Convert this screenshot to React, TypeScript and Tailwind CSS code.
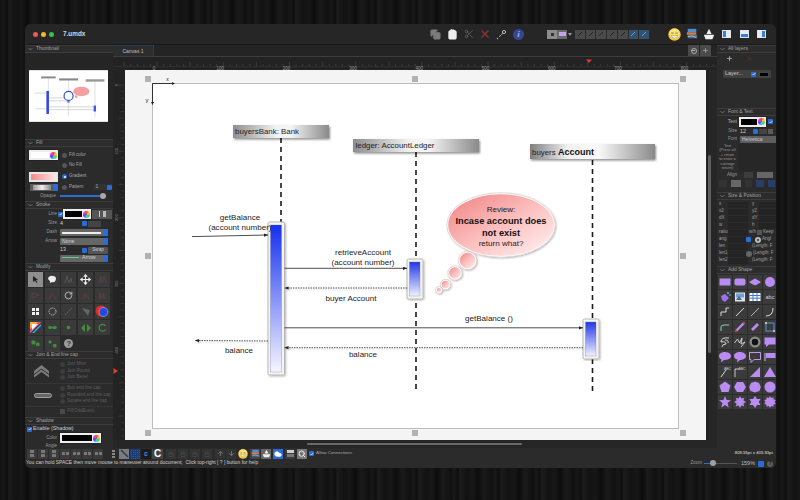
import type { ReactNode } from "react";
import { ArrowDown, ArrowUp, Clipboard, Cloud, Copy, Lock, Move, Plus, RotateCw, Scissors, Search, X } from "lucide-react";

const rulerX = [0, 100, 200, 300, 400, 500, 600, 700, 800];
const wheel = "w-[7px] h-[7px] rounded-full bg-[conic-gradient(#f43,#fc3,#4d4,#3cf,#44f,#e3e,#f43)]";

function Section({ title, className, children }: { title: string; className: string; children?: ReactNode }) {
  return (
    <div className={className}>
      <div className="flex h-[8px] items-center gap-[3px] border-b border-t border-[#3c3c3c] bg-[#2c2c2c] pl-[3px] text-[4.9px] leading-none text-[#a4a4a4]">
        <svg width="5" height="4" viewBox="0 0 5 4"><path d="M0.5 1 L2.5 3 L4.5 1" fill="none" stroke="#8a8a8a" strokeWidth="0.7" /></svg>
        {title}
      </div>
      {children}
    </div>
  );
}

function Well({ w, inner = "bg-black" }: { w: string; inner?: string }) {
  return (
    <div className={`${w} flex h-[10px] items-center justify-between bg-[#eeeeee] pl-[2px] pr-[1px] shadow-[0_0_1px_#000]`}>
      <div className={`${inner} mr-[1px] h-[6px] flex-1`} />
      <div className={wheel} />
    </div>
  );
}

function Radio({ on, label, dim }: { on?: boolean; label: string; dim?: boolean }) {
  return (
    <div className={`flex items-center gap-[2px] whitespace-nowrap text-[4.5px] leading-none ${dim ? "text-[#5e5e5e]" : "text-[#a8a8a8]"}`}>
      <span className={`flex h-[5px] w-[5px] items-center justify-center rounded-full ${on ? "bg-[#2a6cd8]" : dim ? "bg-[#3d3d3d]" : "bg-[#555555]"}`}>
        {on && <span className="h-[2px] w-[2px] rounded-full bg-white" />}
      </span>
      {label}
    </div>
  );
}

function Check({ className = "" }: { className?: string }) {
  return (
    <span className={`flex h-[5px] w-[5px] shrink-0 items-center justify-center rounded-[1px] bg-[#2a6cd8] ${className}`}>
      <svg width="4" height="4" viewBox="0 0 4 4"><path d="M0.6 2 L1.6 3 L3.4 0.8" fill="none" stroke="#fff" strokeWidth="0.7" /></svg>
    </span>
  );
}

function Blue({ className = "" }: { className?: string }) {
  return <span className={`block h-[5px] w-[5px] shrink-0 rounded-[1px] bg-[#2a6cd8] ${className}`} />;
}

function Select({ w, label, inner }: { w: string; label?: string; inner?: ReactNode }) {
  return (
    <div className={`${w} flex h-[7px] items-center justify-between rounded-[1px] bg-[#666666] pl-[2px] text-[5.2px] leading-none text-[#d0d0d0]`}>
      <span className="flex flex-1 items-center">{label}{inner}</span>
      <Blue className="h-[7px]" />
    </div>
  );
}

function Row({ h, label, children }: { h: string; label: string; children?: ReactNode }) {
  return (
    <div className={`${h} flex items-center`}>
      <span className="mr-[3px] w-[32px] text-right text-[4.5px] leading-none text-[#9a9a9a]">{label}</span>
      {children}
    </div>
  );
}

const dim = "#565656";
const green = "#3f8f3a";
const modifyIcons: ReactNode[] = [
  <svg width="9" height="9" viewBox="0 0 9 9"><path d="M2 1 L2 7 L4 5.5 L5.5 8 L6.5 7.3 L5 5 L7 4.7Z" fill="#222" /></svg>,
  <svg width="10" height="9" viewBox="0 0 10 9"><path d="M1 3 Q3 0 6 1 Q9 1 9 4 Q8 8 5 7 L3 8 L3 6 Q1 5 1 3Z" fill="#eee" /></svg>,
  <svg width="9" height="9" viewBox="0 0 9 9"><path d="M1 8 L3 1 L5 8 M5 8 L7 3 L8 8" fill="none" stroke={dim} /></svg>,
  <Move size={11} color="#f0f0f0" strokeWidth={2.5} />,
  <svg width="9" height="9" viewBox="0 0 9 9"><path d="M1 8 L3 1 L4 8 M5 8 L6 1 L8 8" fill="none" stroke="#5a3f3f" /></svg>,
  <svg width="9" height="9" viewBox="0 0 9 9"><path d="M1 2 L8 4 L1 7Z" fill="none" stroke="#5a3f3f" /></svg>,
  <svg width="9" height="9" viewBox="0 0 9 9"><path d="M1 8 L4 2 L8 8" fill="none" stroke="#5a3f3f" /></svg>,
  <RotateCw size={9} color="#dddddd" strokeWidth={2} />,
  <svg width="9" height="9" viewBox="0 0 9 9"><path d="M1 8 L4 2 L8 8 M4 2 L4 8" fill="none" stroke="#5a3f3f" /></svg>,
  <svg width="9" height="9" viewBox="0 0 9 9"><path d="M1 8 L2 2 L3 8 M4 8 L5 2 L6 8 L8 4" fill="none" stroke="#5a3f3f" /></svg>,
  <svg width="9" height="9" viewBox="0 0 9 9"><g fill="#f2f2f2"><rect x="1" y="1" width="3" height="3" /><rect x="5" y="1" width="3" height="3" /><rect x="1" y="5" width="3" height="3" /><rect x="5" y="5" width="3" height="3" /></g></svg>,
  <svg width="9" height="9" viewBox="0 0 9 9"><circle cx="4.5" cy="4.5" r="3.5" fill="none" stroke="#ddd" strokeDasharray="1 1" /></svg>,
  <svg width="9" height="9" viewBox="0 0 9 9"><path d="M1 8 L8 1" stroke="#777" strokeWidth="0.8" strokeDasharray="2 1" /></svg>,
  <svg width="10" height="10" viewBox="0 0 10 10"><path d="M1 1 L9 3 L7 9 L4 5Z" fill="#5d6a62" /></svg>,
  <svg width="15" height="15" viewBox="0 0 15 15"><circle cx="6" cy="7" r="5.5" fill="#e62a22" /><circle cx="8.5" cy="8" r="4.5" fill="#2448e0" stroke="#cfd6ff" strokeWidth="0.5" /></svg>,
  <svg width="13" height="13" viewBox="0 0 13 13"><path d="M1 12 V1 H12Z" fill="#f3b13c" /><path d="M1 12 V8 L9 1 H12Z" fill="#e9458a" /><path d="M3 12 L12 3 V5 L5 12Z" fill="#34a8e8" /><path d="M3 3 H9 L3 9Z" fill="#fff" /></svg>,
  <svg width="9" height="5" viewBox="0 0 9 5"><g fill={green}><circle cx="2" cy="2.5" r="1.8" /><circle cx="7" cy="2.5" r="1.8" /><rect x="2" y="1.6" width="5" height="1.8" /></g></svg>,
  <svg width="5" height="5" viewBox="0 0 5 5"><circle cx="2.5" cy="2.5" r="1.8" fill={green} /></svg>,
  <svg width="10" height="8" viewBox="0 0 10 8"><g fill={green}><path d="M4 0 V8 L0 4Z" /><path d="M6 0 V8 L10 4Z" /></g></svg>,
  <svg width="9" height="9" viewBox="0 0 9 9"><path d="M7.5 3 A3.4 3.4 0 1 0 7.5 6.5" fill="none" stroke={green} strokeWidth="1.2" /></svg>,
  <svg width="9" height="7" viewBox="0 0 9 7"><g fill={green}><rect x="0.5" y="0.5" width="4" height="4" rx="1" /><rect x="5" y="2.5" width="3.5" height="3.5" rx="1" /></g></svg>,
  <svg width="9" height="8" viewBox="0 0 9 8"><g fill={green}><rect x="0.5" y="0.5" width="3" height="3" rx="1" /><rect x="5" y="4" width="3.5" height="3.5" rx="1" /></g></svg>,
  <span className="flex h-[9px] w-[9px] items-center justify-center rounded-full bg-[#9a9a9a] text-[7px] font-bold leading-none text-[#333333]">?</span>,
];

const P = "#b98cf2";
const wire = "#e9e9e9";
const shapeIcons: ReactNode[] = [
  <rect x="1.5" y="3.5" width="11" height="7" fill={P} />,
  <rect x="1.5" y="3.5" width="11" height="7" rx="2" fill={P} />,
  <path d="M1 7 Q4 5 7 3.5 Q10 5 13 7 Q10 9 7 10.5 Q4 9 1 7Z" fill={P} />,
  <circle cx="7" cy="7" r="5" fill={P} />,
  <g><path d="M3 6 L7 4 L11 8 L7 12 L4 10Z" fill="#a070ee" /><circle cx="10" cy="3" r="1" fill="#5cc8f0" /><circle cx="12" cy="5" r="0.8" fill="#5cc8f0" /></g>,
  <g><rect x="2" y="2.5" width="10" height="9" fill="#dbe4ee" /><rect x="3" y="3.5" width="8" height="4" fill="#6da0d8" /><path d="M3 10 L6 6 L9 10Z" fill="#55606a" /></g>,
  <g><rect x="1.5" y="3" width="11" height="8" fill="#fff" /><path d="M1.5 5.5 H12.5 M1.5 8.2 H12.5 M5 3 V11 M9 3 V11" stroke="#3a78d8" strokeWidth="1" /></g>,
  <text x="7" y="9" fontSize="5.5" textAnchor="middle" fill="#cfcfcf">abc</text>,
  <path d="M3 11 V7 H8 V3 H11" fill="none" stroke={wire} strokeWidth="0.9" />,
  <path d="M3 11 L11 3" stroke={wire} strokeWidth="0.9" />,
  <path d="M3 11 L11 3" stroke={wire} strokeWidth="0.7" />,
  <path d="M3 11 Q10 11 10 3" fill="none" stroke={wire} strokeWidth="0.9" />,
  <path d="M3 11 V7 Q3 5 6 5 H11" fill="none" stroke="#8fe0d8" strokeWidth="0.9" />,
  <g><path d="M3 11 L11 3" stroke={P} strokeWidth="2.4" /><circle cx="3" cy="11" r="1" fill="#e33" /><circle cx="11" cy="3" r="1" fill="#e33" /></g>,
  <path d="M4 10 L10 4" stroke={P} strokeWidth="2.8" />,
  <g><rect x="3" y="3" width="8" height="8" fill="none" stroke="#5c8fe0" /><rect x="2" y="2" width="2" height="2" fill="#bbb" /><rect x="10" y="10" width="2" height="2" fill="#bbb" /></g>,
  <path d="M11 3 Q3 2 3 7 Q8 6 8 9 Q4 9 4 12 M7 5 Q11 5 10 8" fill="none" stroke={wire} strokeWidth="0.9" />,
  <path d="M1.5 8 L4.5 4 L6.5 8 L9 3 L8 9 L12 7 L8 12" fill="none" stroke={wire} strokeWidth="0.8" />,
  <g><circle cx="7" cy="7" r="5.5" fill="#8a8a8a" /><circle cx="7" cy="7" r="3.2" fill="#111" /></g>,
  <path d="M1.5 2.5 H12.5 V9.5 H6 L3 12 V9.5 H1.5Z" fill={P} />,
  <path d="M7 2 C12 2 13 5 13 6 C13 9 9 10 6 10 L3 12.5 L3.5 9.5 C2 9 1 7.5 1 6 C1 3.5 4 2 7 2Z" fill={P} />,
  <path d="M7 2 C12 2 13 5 13 6 C13 9 9 10 7 10 L4 12.5 L4.5 9.5 C2 9 1 7.5 1 6 C1 3.5 4 2 7 2Z" fill={P} />,
  <path d="M1.5 2.5 H12.5 V9.5 H6 L3 12.5 V9.5 H1.5Z" fill="none" stroke="#c9a6f7" strokeWidth="0.9" />,
  <g><rect x="3" y="3" width="9.5" height="5" fill={P} /><path d="M2 3 V11" stroke={wire} strokeWidth="0.8" /></g>,
  <g><path d="M3 12 L8 5" stroke={wire} strokeWidth="0.9" /><text x="9.5" y="5" fontSize="3.5" textAnchor="middle" fill="#ccc">ABC</text></g>,
  <g><path d="M2 12 V4 H6" fill="none" stroke={wire} strokeWidth="0.8" /><text x="9" y="5" fontSize="3.5" textAnchor="middle" fill="#ccc">ABC</text></g>,
  <path d="M2 12 L12 2 V12Z" fill={P} />,
  <path d="M7 2 L13 12 H1Z" fill={P} />,
  <path d="M7 1.5 L12.5 5.5 L10.5 12 H3.5 L1.5 5.5Z" fill={P} />,
  <path d="M4 2 H10 L13 7 L10 12 H4 L1 7Z" fill={P} />,
  <path d="M7 1.5 L11 3 L12.8 7 L11.5 11 L7 12.5 L2.5 11 L1.2 7 L3 3Z" fill={P} />,
  <circle cx="7" cy="7" r="5.5" fill={P} />,
  <path d="M7 1 L8.6 5 L13 5.3 L9.6 8 L10.7 12.5 L7 10 L3.3 12.5 L4.4 8 L1 5.3 L5.4 5Z" fill={P} />,
  <path d="M7 1 L8.4 3.6 L11.2 2.8 L10.4 5.6 L13 7 L10.4 8.4 L11.2 11.2 L8.4 10.4 L7 13 L5.6 10.4 L2.8 11.2 L3.6 8.4 L1 7 L3.6 5.6 L2.8 2.8 L5.6 3.6Z" fill={P} />,
  <path d="M7 1 L9 4 L12.5 4 L10.8 7 L12.5 10 L9 10 L7 13 L5 10 L1.5 10 L3.2 7 L1.5 4 L5 4Z" fill={P} />,
  <path d="M7 1 L8.2 3 L10.5 2.2 L10.6 4.4 L12.8 5 L11.5 7 L12.8 9 L10.6 9.6 L10.5 11.8 L8.2 11 L7 13 L5.8 11 L3.5 11.8 L3.4 9.6 L1.2 9 L2.5 7 L1.2 5 L3.4 4.4 L3.5 2.2 L5.8 3Z" fill={P} />,
];

function Emoji({ size }: { size: number }) {
  return (
    <svg width={size} height={size} viewBox="0 0 14 14">
      <circle cx="7" cy="7" r="6.7" fill="#f3c63c" />
      <circle cx="7" cy="6" r="5.5" fill="#fbe27a" />
      <path d="M3.5 5.5 H6 M8 5.5 H10.5" stroke="#6b4d10" strokeWidth="0.8" />
      <path d="M3.5 8 Q7 9 10.5 8 Q9.5 11 7 11 Q4.5 11 3.5 8Z" fill="#fff" stroke="#6b4d10" strokeWidth="0.4" />
    </svg>
  );
}

function LayersIcon({ size }: { size: number }) {
  return (
    <svg width={size} height={size} viewBox="0 0 14 14">
      <rect x="2" y="1" width="10" height="4" fill="#4f8fd0" />
      <rect x="1" y="5" width="11" height="3" fill="#d87a4a" />
      <rect x="2" y="8" width="11" height="4" fill="#3c6ea8" />
      <path d="M2 10 Q7 8 12 11" stroke="#e8c070" fill="none" />
    </svg>
  );
}

function BoatIcon({ size }: { size: number }) {
  return (
    <svg width={size} height={size} viewBox="0 0 14 14">
      <path d="M7 1 L10 7 H4Z" fill="#f0f0f0" />
      <path d="M1 8 H13 L11 13 H3Z" fill="#f0f0f0" />
    </svg>
  );
}

function PanelIcon({ side }: { side: "left" | "bottom" | "right" }) {
  return (
    <div className="flex h-[8px] w-[9px] border border-[#dce6f2] bg-[#e6edf6]">
      {side === "left" && <div className="h-full w-[3px] bg-[#3f7fd2]" />}
      {side === "bottom" && <div className="mt-auto h-[3px] w-full bg-[#3f7fd2]" />}
      {side === "right" && <div className="ml-auto h-full w-[3px] bg-[#3f7fd2]" />}
    </div>
  );
}

function TitleBar() {
  return (
    <div className="flex h-[21px] shrink-0 items-center border-b border-[#1a1a1a] bg-[#262626]">
      <div className="ml-[8px] flex gap-[3px]">
        <span className="h-[5px] w-[5px] rounded-full bg-[#ee5a52]" />
        <span className="h-[5px] w-[5px] rounded-full bg-[#f3b62f]" />
        <span className="h-[5px] w-[5px] rounded-full bg-[#35c24a]" />
      </div>
      <span className="ml-[9px] w-[22px] text-[6.4px] font-bold leading-none text-[#d8d8d8]">7.umdx</span>
      <div className="ml-[342px] flex items-center">
        <span className="flex w-[17px] justify-center"><Copy size={11} color="#7b7b7b" fill="#7b7b7b" /></span>
        <span className="flex w-[16px] justify-center"><Clipboard size={11} color="#eeeeee" fill="#eeeeee" /></span>
        <span className="flex w-[17px] justify-center"><Scissors size={10} color="#5c6668" /></span>
        <span className="flex w-[16px] justify-center"><X size={12} color="#8c3030" strokeWidth={3} /></span>
        <span className="flex w-[17px] justify-center">
          <svg width="11" height="11" viewBox="0 0 11 11"><path d="M3 8 L7 4" stroke="#999" /><circle cx="8" cy="3" r="1.6" fill="none" stroke="#bbb" /><circle cx="1.5" cy="9.5" r="0.7" fill="#bbb" /></svg>
        </span>
        <span className="ml-[3px] flex h-[11px] w-[11px] items-center justify-center rounded-full bg-[#34478f] [font-family:'Liberation_Serif',serif] text-[9px] font-bold italic leading-none text-[#9fb0e8]">i</span>
      </div>
      <div className="ml-[23px] flex items-center">
        <span className="flex h-[9px] w-[10px] items-center justify-center bg-[#8c8c8c]"><span className="h-[3px] w-[3px] bg-[#333333]" /></span>
        <span className="flex h-[9px] w-[10px] items-center justify-center bg-[#6a6a6a]"><span className="h-[4px] w-[7px] bg-[#c4a2f2]" /></span>
        <svg className="ml-[1px]" width="4" height="3" viewBox="0 0 4 3"><path d="M0 0 H4 L2 3Z" fill="#999" /></svg>
      </div>
      <div className="ml-[3px] flex h-[9px] w-[75px]">
        {["#4a4a4a", "#4a4a4a", "#4a4a4a", "#4a4a4a", "#4a4a4a", "#33526e", "#33526e"].map((c, i) => (
          <span key={i} className="flex flex-1 items-center justify-center border-r border-[#2a2a2a]" style={{ backgroundColor: c }}>
            <svg width="6" height="6" viewBox="0 0 6 6"><path d="M1 5 L5 1" stroke={i > 4 ? "#5aa0e8" : "#222"} strokeWidth="1" /></svg>
          </span>
        ))}
      </div>
      <div className="ml-[18px]"><Emoji size={13} /></div>
      <div className="ml-[4.5px]"><LayersIcon size={12} /></div>
      <div className="ml-[5px]"><BoatIcon size={12} /></div>
      <div className="ml-[7.5px]"><PanelIcon side="left" /></div>
      <div className="ml-[9px]"><PanelIcon side="bottom" /></div>
      <div className="ml-[8px]"><PanelIcon side="right" /></div>
    </div>
  );
}

function Thumbnail() {
  return (
    <svg className="ml-[4px] mt-[17px] block" width="79" height="52" viewBox="152 83 527 345">
      <rect x="152" y="83" width="527" height="345" fill="#fff" />
      <rect x="233" y="125" width="97" height="13" fill="#888" />
      <rect x="353" y="138" width="127" height="14" fill="#888" />
      <rect x="530" y="144" width="125" height="16" fill="#999" />
      <path d="M281 138 V375 M416 152 V391 M592 160 V394" stroke="#bbb" strokeWidth="3" />
      <rect x="268" y="222" width="17" height="153" fill="#3345e0" />
      <rect x="407" y="259" width="16" height="41" fill="#6677ee" />
      <rect x="583" y="319" width="16" height="40" fill="#4455e8" />
      <path d="M192 236 H268 M284 268 H407 M284 288 H407 M284 328 H583 M284 347 H583 M195 341 H268" stroke="#777" strokeWidth="2" />
      <ellipse cx="501" cy="225" rx="54" ry="32" fill="#f2a0a0" />
      <circle cx="416" cy="255" r="30" fill="#fff" stroke="#2a52d8" strokeWidth="8" />
      <circle cx="467" cy="260" r="9" fill="#f2a0a0" />
    </svg>
  );
}

function LeftPanel() {
  return (
    <div className="flex h-full w-[88px] shrink-0 flex-col bg-[#2b2b2b]">
      <Section title="Thumbnail" className="h-[94px] bg-[#252525]"><Thumbnail /></Section>
      <Section title="Fill" className="h-[62px]">
        <div className="pt-[3px]">
          <div className="flex h-[10px] items-center pl-[4px]">
            <Well w="w-[29px]" inner="bg-white" />
            <div className="ml-[4px]"><Radio label="Fill color" /></div>
          </div>
          <div className="flex h-[11px] items-center pl-[37px]"><Radio label="No Fill" /></div>
          <div className="flex h-[11px] items-center pl-[4px]">
            <div className="flex h-[10px] w-[29px] items-center bg-[#e6e6e6] px-[2px]"><div className="h-[6px] w-full bg-[linear-gradient(90deg,#f08a8a,#ffe3e3)]" /></div>
            <div className="ml-[4px]"><Radio on label="Gradient" /></div>
          </div>
          <div className="flex h-[10px] items-center pl-[5px]">
            <div className="flex h-[7px] w-[28px] items-center bg-[#5c5c5c] pl-[3px]"><div className="mr-[2px] h-[5px] flex-1 bg-[linear-gradient(90deg,#999,#eee,#888)]" /><Blue className="h-[7px]" /></div>
            <div className="ml-[4px]"><Radio label="Pattern" /></div>
            <span className="ml-[10px] flex h-[6px] w-[18px] items-center justify-between bg-[#333333] pl-[2px] text-[5px] text-[#aaaaaa]">1<Blue /></span>
          </div>
          <div className="flex h-[8px] items-center">
            <span className="mr-[4px] w-[31px] text-right text-[4.5px] leading-none text-[#999999]">Opaque</span>
            <div className="relative h-[1.5px] w-[46px] bg-[#2a6cd8]"><span className="absolute -top-[2px] right-0 h-[6px] w-[6px] rounded-full bg-[#a8a8a8]" /></div>
          </div>
        </div>
      </Section>
      <Section title="Stroke" className="h-[62px]">
        <Row h="h-[10px]" label="Line">
          <Check className="-ml-[2px] mr-[1px]" />
          <div className="-ml-[1px]"><Well w="w-[28px]" /></div>
          <span className="ml-[1px] flex h-[9px] w-[20px] items-center justify-center gap-[3px] bg-[#555555]">
            <span className="h-[6px] w-[1px] bg-[#cccccc]" /><span className="h-[6px] w-[3px] bg-[#bbbbbb]" />
          </span>
        </Row>
        <Row h="h-[9px]" label="Size">
          <span className="w-[22px] text-[5.5px] leading-none text-[#cccccc]">4</span>
          <Blue />
          <span className="ml-[1px] h-[6px] w-[13px] bg-[#444444]" />
        </Row>
        <Row h="h-[9px]" label="Dash"><Select w="w-[48px]" inner={<span className="mr-[2px] h-[2px] flex-1 bg-[#eeeeee]" />} /></Row>
        <Row h="h-[9px]" label="Arrow"><Select w="w-[48px]" label="None" /></Row>
        <div className="flex h-[8px] items-center pl-[35px]">
          <span className="w-[22px] text-[5.2px] leading-none text-[#cccccc]">13</span>
          <Blue />
          <span className="ml-[1px] flex h-[7px] w-[20px] items-center justify-center rounded-[1px] bg-[#555555] text-[4.6px] leading-none text-[#cccccc]">Swap</span>
        </div>
        <div className="flex h-[8px] items-center pl-[35px]"><Select w="w-[48px]" inner={<><span className="h-[1px] w-[17px] bg-[#5fd08a]" /><span className="ml-[3px] text-[5.2px]">Arrow</span></>} /></div>
      </Section>
      <Section title="Modify" className="h-[88px]">
        <div className="grid grid-cols-[repeat(5,15px)] gap-x-[1.7px] gap-y-px pl-[3px] pt-[1px]">
          {modifyIcons.map((icon, i) => (
            <div key={i} className={`flex h-[15px] w-[15px] items-center justify-center ${i === 0 ? "bg-[#8e8e8e]" : i === 22 ? "" : "bg-[#3a3a3a]"}`}>{icon}</div>
          ))}
        </div>
      </Section>
      <Section title="Join & End line cap" className="h-[66px]">
        <div className="flex h-[25px] items-center border-b border-[#363636]">
          <svg className="ml-[8px]" width="17" height="14" viewBox="0 0 17 14">
            <path d="M1 7 L8.5 1 L16 7 V10 L8.5 4.5 L1 10Z M1 11 L8.5 5.5 L16 11 V13.5 L8.5 8 L1 13.5Z" fill="#7d7d7d" />
          </svg>
          <div className="ml-[10px] flex flex-col gap-[1.5px]">
            <Radio dim label="Join Miter" />
            <Radio dim label="Join Round" />
            <Radio dim label="Join Bevel" />
          </div>
        </div>
        <div className="flex h-[23px] items-center border-b border-[#363636]">
          <span className="ml-[9px] block h-[5px] w-[18px] rounded-full border border-[#a0a0a0] bg-[#666666]" />
          <div className="ml-[8px] flex flex-col gap-[1.5px]">
            <Radio dim label="Butt end line cap" />
            <Radio dim label="Rounded end line cap" />
            <Radio dim label="Square end line cap" />
          </div>
        </div>
        <div className="flex h-[9px] items-center gap-[2px] pl-[35px] text-[4.5px] leading-none text-[#5e5e5e]">
          <span className="h-[5px] w-[5px] bg-[#4a4a4a]" />Fill(OddEven)
        </div>
      </Section>
      <Section title="Shadow" className="h-[31px] overflow-hidden">
        <div className="flex h-[8px] items-center gap-[1px] pl-[2px] text-[5.3px] leading-none text-[#cfcfcf]"><Check />Enable (Shadow)</div>
        <Row h="h-[10px]" label="Color"><Well w="w-[41px]" /></Row>
        <Row h="h-[6px]" label="Angle" />
      </Section>
    </div>
  );
}

function Tabs() {
  return (
    <div className="flex h-[12px] shrink-0 items-stretch border-b border-[#3c3c3c] bg-[#242424]">
      <div className="flex w-[41px] items-center justify-center border-r border-t border-[#1c3d5c] border-r-[#3c3c3c] bg-[#2d2d2d] text-[5px] leading-none text-[#c0c0c0]">Canvas 1</div>
      <div className="ml-auto mr-[6px] flex">
        <span className="flex w-[11px] items-center justify-center bg-[#4a4a4a]"><span className="flex h-[6px] w-[6px] items-center justify-center rounded-full border border-[#aaaaaa]"><span className="h-px w-[3px] bg-[#aaaaaa]" /></span></span>
        <span className="ml-px flex w-[11px] items-center justify-center bg-[#4a4a4a]"><Plus size={7} color="#bbbbbb" /></span>
      </div>
    </div>
  );
}

function RulerTop() {
  return (
    <div className="h-[13px] shrink-0 bg-[#232323]">
      <svg className="block" width="604" height="13" viewBox="113 57 604 13">
        {Array.from({ length: 92 }).map((_, i) => {
          const x = 124 + i * 6.62;
          return <path key={i} d={`M${x} ${i % 5 === 0 ? 62 : 64} V66`} stroke="#555555" strokeWidth="0.5" />;
        })}
        <path d="M113 66.5 H717" stroke="#3a3a3a" strokeWidth="0.5" />
        {rulerX.map((v, i) => (
          <text key={v} x={154 + i * 66.3} y="69.5" fontSize="4.5" textAnchor="middle" fill="#9a9a9a">{v}</text>
        ))}
        <path d="M586 59.5 H592 L589 63Z" fill="#e23b2e" />
      </svg>
    </div>
  );
}

function RulerLeft() {
  return (
    <div className="w-[12px] shrink-0 bg-[#232323]">
      <svg className="block" width="12" height="370" viewBox="113 70 12 370">
        {Array.from({ length: 56 }).map((_, i) => {
          const y = 85 + i * 6.62;
          return <path key={i} d={`M${i % 5 === 0 ? 119 : 121} ${y} H124`} stroke="#4d4d4d" strokeWidth="0.5" />;
        })}
        {[0, 100, 200, 300, 400].map((v, i) => (
          <text key={v} x={118} y={85 + i * 66.3} fontSize="4" textAnchor="middle" fill="#8a8a8a" transform={`rotate(-90 118 ${85 + i * 66.3})`}>{v}</text>
        ))}
        <path d="M113.5 368 L118 371 L113.5 374Z" fill="#e23b2e" />
      </svg>
    </div>
  );
}

function Activation({ x, y, w, h, id }: { x: number; y: number; w: number; h: number; id: string }) {
  return (
    <g>
      <rect x={x} y={y} width={w} height={h} rx="1.5" fill="#f4f4f4" stroke="#a9a9a9" strokeWidth="0.8" filter="url(#soft)" />
      <rect x={x + 2.5} y={y + 3} width={w - 5.5} height={h - 6} fill={`url(#${id})`} stroke="#6a6aa0" strokeWidth="0.3" />
    </g>
  );
}

function Head({ x, y, w, h, fill }: { x: number; y: number; w: number; h: number; fill: string }) {
  return <rect x={x} y={y} width={w} height={h} fill={fill} filter="url(#drop)" />;
}

const label = { fontSize: 8.05, fill: "#1c1c1c", textAnchor: "middle" as const };

function Diagram() {
  return (
    <svg className="block" width="581" height="370" viewBox="125 70 581 370">
      <defs>
        <linearGradient id="hg"><stop offset="0" stopColor="#8d8d8d" /><stop offset="0.45" stopColor="#f2f2f2" /><stop offset="0.6" stopColor="#f4f4f4" /><stop offset="1" stopColor="#8a8a8a" /></linearGradient>
        <linearGradient id="hg2"><stop offset="0" stopColor="#7f7f7f" /><stop offset="0.3" stopColor="#f0f0f0" /><stop offset="0.55" stopColor="#fafafa" /><stop offset="1" stopColor="#8a8a8a" /></linearGradient>
        <linearGradient id="act" x1="0" y1="0" x2="0" y2="1"><stop offset="0" stopColor="#1530ee" /><stop offset="1" stopColor="#f6f6ff" /></linearGradient>
        <linearGradient id="act2" x1="0" y1="0" x2="0" y2="1"><stop offset="0" stopColor="#2238e6" /><stop offset="1" stopColor="#f0f0ff" /></linearGradient>
        <linearGradient id="pink" x1="0" y1="0" x2="1" y2="1"><stop offset="0" stopColor="#f08080" /><stop offset="0.55" stopColor="#fdc4c4" /><stop offset="1" stopColor="#fff4f4" /></linearGradient>
        <filter id="drop" x="-5%" y="-30%" width="110%" height="170%"><feDropShadow dx="1" dy="1.5" stdDeviation="1.2" floodColor="#000" floodOpacity="0.45" /></filter>
        <filter id="soft" x="-30%" y="-5%" width="160%" height="110%"><feDropShadow dx="1" dy="1" stdDeviation="1" floodColor="#000" floodOpacity="0.3" /></filter>
        <marker id="ah" markerWidth="6" markerHeight="5" refX="5" refY="2.5" orient="auto"><path d="M0 0.5 L5 2.5 L0 4.5Z" fill="#222" /></marker>
      </defs>
      <rect x="125" y="70" width="581" height="370" fill="#f4f4f4" />
      <rect x="152.5" y="83.5" width="526" height="345" fill="#ffffff" stroke="#bdbdbd" strokeWidth="1" />

      {[[148, 79], [415, 79], [683, 79], [148, 256], [683, 256], [148, 433], [415, 433], [683, 433]].map(([x, y]) => (
        <rect key={`${x}-${y}`} x={x - 3} y={y - 3} width="6" height="6" fill="#b2b2b2" />
      ))}

      <path d="M152.5 103 V83.5 H172" fill="none" stroke="#222" strokeWidth="0.9" />
      <path d="M172 82 L175 83.5 L172 85Z M151 102 L152.5 105 L154 102Z" fill="#222" />
      <text x="167.5" y="81" fontSize="5" textAnchor="middle" fill="#222">x</text>
      <text x="147" y="102" fontSize="6" textAnchor="middle" fill="#222">y</text>

      <path d="M281 138 V222 M416 152 V259 M416 303 V391 M592.5 160 V319 M592.5 359 V394" stroke="#1a1a1a" strokeWidth="1.6" strokeDasharray="5 4" />

      <Head x={233} y={125} w={96} h={13} fill="url(#hg)" />
      <text x="235" y="133.5" fontSize="7.9" fill="#1c1c1c">buyersBank: Bank</text>
      <Head x={353} y={139} w={126} h={13} fill="url(#hg)" />
      <text x="355.5" y="147.8" fontSize="7.9" fill="#1c1c1c">ledger: AccountLedger</text>
      <Head x={530} y={144} w={125} h={15} fill="url(#hg2)" />
      <text x="532" y="154.5" fontSize="7.9" fill="#1c1c1c">buyers <tspan fontWeight="bold" fontSize="9" fill="#111">Account</tspan></text>

      <Activation x={268} y={222} w={16.5} h={153} id="act" />
      <Activation x={407} y={259} w={16} h={40} id="act2" />
      <Activation x={583} y={319} w={16} h={40} id="act2" />

      <path d="M192 236.6 L268 235" stroke="#222" strokeWidth="0.8" markerEnd="url(#ah)" />
      <path d="M284.5 268.3 H407" stroke="#222" strokeWidth="0.8" markerEnd="url(#ah)" />
      <path d="M284.5 327.8 H583" stroke="#222" strokeWidth="0.8" markerEnd="url(#ah)" />
      <g stroke="#333" strokeWidth="0.8" strokeDasharray="1.5 1" markerEnd="url(#ah)" filter="url(#soft)">
        <path d="M407 288 H284.5" />
        <path d="M583 347.7 H284.5" />
        <path d="M268 341 L195 340.5" />
      </g>

      <text {...label} x="240" y="220">getBalance</text>
      <text {...label} x="240" y="230">(account number)</text>
      <text {...label} x="363" y="254.5">retrieveAccount</text>
      <text {...label} x="363" y="264.5">(account number)</text>
      <text {...label} x="351" y="301">buyer Account</text>
      <text {...label} x="239" y="353">balance</text>
      <text {...label} x="363" y="357">balance</text>
      <text {...label} x="489" y="321">getBalance ()</text>

      <g fill="url(#pink)" stroke="#fff" strokeWidth="1.4" filter="url(#soft)">
        <ellipse cx="501" cy="225" rx="53.5" ry="31.5" />
        <circle cx="467.6" cy="260.5" r="8.5" />
        <circle cx="455" cy="273" r="6.5" />
        <circle cx="445.5" cy="284.5" r="4.5" />
        <circle cx="439" cy="290" r="2.8" />
      </g>
      <g fill="none" stroke="#b9a0a0" strokeWidth="0.4">
        <ellipse cx="501" cy="225" rx="54.2" ry="32.2" />
        <circle cx="467.6" cy="260.5" r="9.2" />
        <circle cx="455" cy="273" r="7.2" />
        <circle cx="445.5" cy="284.5" r="5.2" />
        <circle cx="439" cy="290" r="3.5" />
      </g>
      <text {...label} x="501" y="212">Review:</text>
      <text x="501" y="223.5" fontSize="9.25" fontWeight="bold" textAnchor="middle" fill="#111">Incase account does</text>
      <text x="501" y="235.5" fontSize="9.25" fontWeight="bold" textAnchor="middle" fill="#111">not exist</text>
      <text {...label} x="501" y="246">return what?</text>
    </svg>
  );
}

function CenterPane() {
  return (
    <div className="flex h-full min-w-0 flex-1 flex-col bg-[#262626]">
      <Tabs />
      <RulerTop />
      <div className="flex h-[370px] shrink-0">
        <RulerLeft />
        <Diagram />
        <div className="ml-[1px] w-[10px] border-l border-[#1c1c1c] pt-[85px]">
          <div className="h-[198px] w-[3px] rounded-full bg-[#5e5e5e]" />
        </div>
      </div>
      <div className="pl-[194px] pt-[3px]">
        <div className="h-[2px] w-[215px] rounded-full bg-[#6a6a6a]" />
      </div>
    </div>
  );
}

function SizeRow({ a, b, right }: { a: string; b?: string; right?: ReactNode }) {
  return (
    <div className="flex h-[7px] items-center text-[4.5px] leading-none text-[#a0a0a0]">
      <span className="ml-[2px] w-[9px]">{a}</span>
      <span className="h-[6px] w-[20px] bg-[#242424]" />
      {right ?? (
        <>
          <span className="ml-[4px] w-[7px]">{b}</span>
          <span className="h-[6px] w-[17px] bg-[#242424]" />
        </>
      )}
    </div>
  );
}

function RightPanel() {
  return (
    <div className="flex h-full w-[59px] shrink-0 flex-col bg-[#2b2b2b]">
      <Section title="All layers" className="h-[63px]">
        <div className="flex h-[11px] items-center">
          <span className="ml-[9px]"><Plus size={7} color="#a8a8a8" strokeWidth={3} /></span>
          <span className="ml-[13px]"><X size={7} color="#5a2d2d" strokeWidth={3} /></span>
        </div>
        <div className="ml-[6px] mt-[6px] flex h-[8px] w-[48px] items-center rounded-[1px] bg-[#414141] pl-[2px] text-[5.5px] leading-none text-[#c8c8c8]">
          <span className="w-[26px]">Layer...</span>
          <Check />
          <span className="ml-[3px] h-[5px] w-[10px] border border-[#444444] bg-black" />
        </div>
      </Section>
      <Section title="Font & Text" className="h-[84px]">
        <div className="flex h-[11px] items-center">
          <span className="w-[20px] text-right text-[5px] leading-none text-[#b0b0b0]">Text</span>
          <div className="ml-[2px]"><Well w="w-[27px]" /></div>
          <Check className="ml-[2px]" />
        </div>
        <div className="flex h-[9px] items-center text-[4.5px] leading-none text-[#999999]">
          <span className="w-[20px] text-right">Size</span>
          <span className="ml-[3px] w-[13px] text-[5.5px] text-[#cccccc]">12</span>
          <Blue />
          <span className="ml-[1px] h-[5px] w-[8px] bg-[#444444]" />
          <span className="ml-[1px] h-[5px] w-[5px] bg-[#5a5a5a]" />
        </div>
        <div className="flex h-[7px] items-center text-[4.5px] leading-none text-[#999999]">
          <span className="w-[20px] text-right">Font</span>
          <span className="ml-[3px] flex h-[7px] flex-1 items-center bg-[#5e5e5e] pl-[2px] text-[5px] text-[#cccccc]">Helvetica</span>
        </div>
        <div className="flex h-[28px] items-start">
          <span className="w-[21px] overflow-hidden pt-[1px] text-center text-[3.9px] leading-[4.4px] text-[#999999]">
            Text<br />(Press alt<br />+ return<br />to enter a<br />carriage<br />return)
          </span>
          <span className="h-full flex-1 bg-[#272727]" />
        </div>
        <div className="flex h-[8px] items-center text-[4.5px] leading-none text-[#999999]">
          <span className="w-[20px] text-right">Align</span>
          <span className="ml-[7px] h-[6px] w-[9px] bg-[#3d3d3d]" />
          <span className="ml-[4px] h-[6px] w-[16px] bg-[#666666]" />
        </div>
        <div className="flex h-[8px] items-center gap-[4px] pl-[2px]">
          <span className="h-[7px] w-[8px] bg-[#333333]" />
          <span className="h-[7px] w-[10px] bg-[#666666]" />
          <span className="h-[7px] w-[7px] bg-[#333333]" />
          <span className="h-[7px] w-[8px] bg-[#27406a]" />
          <span className="h-[7px] w-[7px] bg-[#27406a]" />
        </div>
      </Section>
      <Section title="Size & Position" className="h-[74px]">
        <div className="pt-[1px]">
          <SizeRow a="x" b="y" />
          <SizeRow a="x2" b="y2" />
          <SizeRow a="dX" b="dY" />
          <SizeRow a="w" b="h" />
          <SizeRow a="ratio" right={<><span className="ml-[1px] w-[8px]">w/h</span><span className="h-[5px] w-[5px] bg-[#555555]" /><span className="ml-[1px]">Keep</span></>} />
          <SizeRow a="ang" right={<><Blue className="-ml-[2px]" /><span className="ml-[4px] h-[6px] w-[6px] rounded-full border-[2px] border-[#bbbbbb] bg-[#333333]" /><span className="ml-[1px]">Angl</span></>} />
          <SizeRow a="len" right={<span className="ml-[4px]">(Length: F</span>} />
          <SizeRow a="len1" right={<><span className="ml-[-2px] h-[6px] w-[6px] rounded-full bg-[#666666]" /><span className="ml-[1px]">(Length: F</span></>} />
          <SizeRow a="len2" right={<span className="ml-[4px]">(Length: F</span>} />
        </div>
      </Section>
      <Section title="Add Shape" className="flex-1">
        <div className="grid grid-cols-[repeat(4,14px)] gap-px pl-[1px] pt-[1px]">
          {shapeIcons.map((s, i) => (
            <div key={i} className="h-[14px] w-[14px] bg-[#3b3b3b]">
              <svg className="block" width="14" height="14" viewBox="0 0 14 14">{s}</svg>
            </div>
          ))}
        </div>
      </Section>
    </div>
  );
}

function BottomBar() {
  const align = Array.from({ length: 7 });
  return (
    <div className="h-[20px] shrink-0 bg-[#2b2b2b]">
      <div className="flex h-[11px] items-center pl-[2px]">
        {align.map((_, i) => (
          <span key={i} className="mr-px flex h-[10px] w-[10px] flex-col items-center justify-center gap-px bg-[#3b3b3b]">
            {i < 3 ? (
              <><span className="h-[3px] w-[4px] bg-[#777777]" /><span className="h-[3px] w-[4px] bg-[#777777]" /></>
            ) : (
              <span className="flex gap-px"><span className="h-[3px] w-[3px] bg-[#777777]" /><span className="h-[3px] w-[3px] bg-[#777777]" /></span>
            )}
          </span>
        ))}
        <span className="ml-[7px] flex w-[5px] flex-col items-center gap-px">
          <span className="h-[2px] w-[3px] bg-[#888888]" /><span className="h-[2px] w-[3px] bg-[#888888]" /><span className="h-[2px] w-[3px] bg-[#888888]" />
        </span>
        <span className="ml-[3px] mr-px flex h-[10px] w-[10px] items-center justify-center bg-[#7b7b7b]"><svg width="9" height="9" viewBox="0 0 9 9"><path d="M1 1 L8 8" stroke="#2c3a55" strokeWidth="1.4" /></svg></span>
        <span className="mr-px h-[10px] w-[10px] bg-[#2a5aa8] bg-[linear-gradient(#1c3a74_1px,transparent_1px),linear-gradient(90deg,#1c3a74_1px,transparent_1px)] bg-[size:2px_2px]" />
        <span className="mr-px flex h-[10px] w-[10px] items-center justify-center bg-[#1c1c1c] text-[7px] font-bold leading-none text-[#3f8fe0]">c</span>
        <span className="mr-[3px] flex h-[10px] w-[11px] items-center justify-center bg-[#444444] text-[10px] font-bold leading-none text-white">C</span>
        {[0, 1, 2, 3].map((i) => (
          <span key={i} className="mr-[2px] flex h-[10px] w-[10px] items-center justify-center bg-[#333333]"><Lock size={6} color="#555555" /></span>
        ))}
        <span className="ml-[1px] mr-[1px] flex h-[10px] w-[10px] items-center justify-center bg-[#333333]"><ArrowUp size={7} color="#777777" strokeWidth={3} /></span>
        <span className="mr-[2px] flex h-[10px] w-[10px] items-center justify-center bg-[#333333]"><ArrowDown size={7} color="#777777" strokeWidth={3} /></span>
        <span className="mr-[2px]"><Emoji size={10} /></span>
        <span className="mr-[1px] flex h-[10px] w-[10px] items-center justify-center bg-[#444444]"><LayersIcon size={9} /></span>
        <span className="mr-[2px] flex h-[10px] w-[10px] items-center justify-center bg-[#666666]"><BoatIcon size={9} /></span>
        <span className="mr-[2px] flex h-[10px] w-[10px] items-center justify-center bg-[#2a6cd8]"><Cloud size={8} color="#ffffff" fill="#ffffff" /></span>
        <span className="mr-[2px] flex h-[10px] w-[10px] flex-col items-center justify-center gap-px bg-[#3a3a3a]"><span className="h-[3px] w-[7px] bg-[#cfcfcf]" /><span className="h-[3px] w-[7px] bg-[#777777]" /></span>
        <span className="mr-[2px] flex h-[10px] w-[10px] items-center justify-center bg-[#777777]"><Search size={8} color="#eeeeee" strokeWidth={3} /></span>
        <Check />
        <span className="ml-[2px] text-[4.4px] leading-none text-[#a8a8a8]">Allow Connections</span>
        <span className="ml-auto mr-[3px] text-[4.2px] font-bold leading-none text-[#b8b8b8]">809.55pt x 435.93pt</span>
      </div>
      <div className="flex h-[9px] items-center pl-[1px] text-[4.95px] leading-none text-[#d0d0d0]">
        <span className="whitespace-pre">You can hold SPACE then move mouse to maneuver around document;  Click top-right [ ? ] button for help</span>
        <span className="ml-auto text-[4.5px] text-[#9a9a9a]">Zoom</span>
        <div className="relative ml-[2px] h-px w-[33px] bg-[#555555]">
          <div className="h-px w-[9px] bg-[#2a6cd8]" />
          <span className="absolute -top-[3px] left-[6px] h-[6px] w-[6px] rounded-full bg-[#a0a0a0]" />
        </div>
        <span className="ml-[4px] w-[17px] text-[5.5px] text-[#bbbbbb]">159%</span>
        <Blue className="h-[6px] w-[6px]" />
        <span className="ml-[3px] mr-[3px] flex h-[6px] w-[6px] items-center justify-center rounded-full bg-[#5e5e5e] text-[5px] font-bold text-[#222222]">?</span>
      </div>
    </div>
  );
}

export default function App() {
  return (
    <div className="h-[500px] w-[800px] overflow-hidden bg-[#111111] bg-[repeating-linear-gradient(90deg,#101010_0px,#181818_3px,#0f0f0f_7px,#1c1c1c_9px,#121212_16px,#171717_22px,#0c0c0c_27px,#1a1a1a_33px,#101010_41px)] pl-[25px] pt-[24px] [font-family:'Liberation_Sans',Arial,sans-serif]">
      <div className="flex h-[444px] w-[751px] flex-col overflow-hidden rounded-[6px] bg-[#2b2b2b]">
        <TitleBar />
        <div className="flex h-[403px] shrink-0">
          <LeftPanel />
          <CenterPane />
          <RightPanel />
        </div>
        <BottomBar />
      </div>
    </div>
  );
}
